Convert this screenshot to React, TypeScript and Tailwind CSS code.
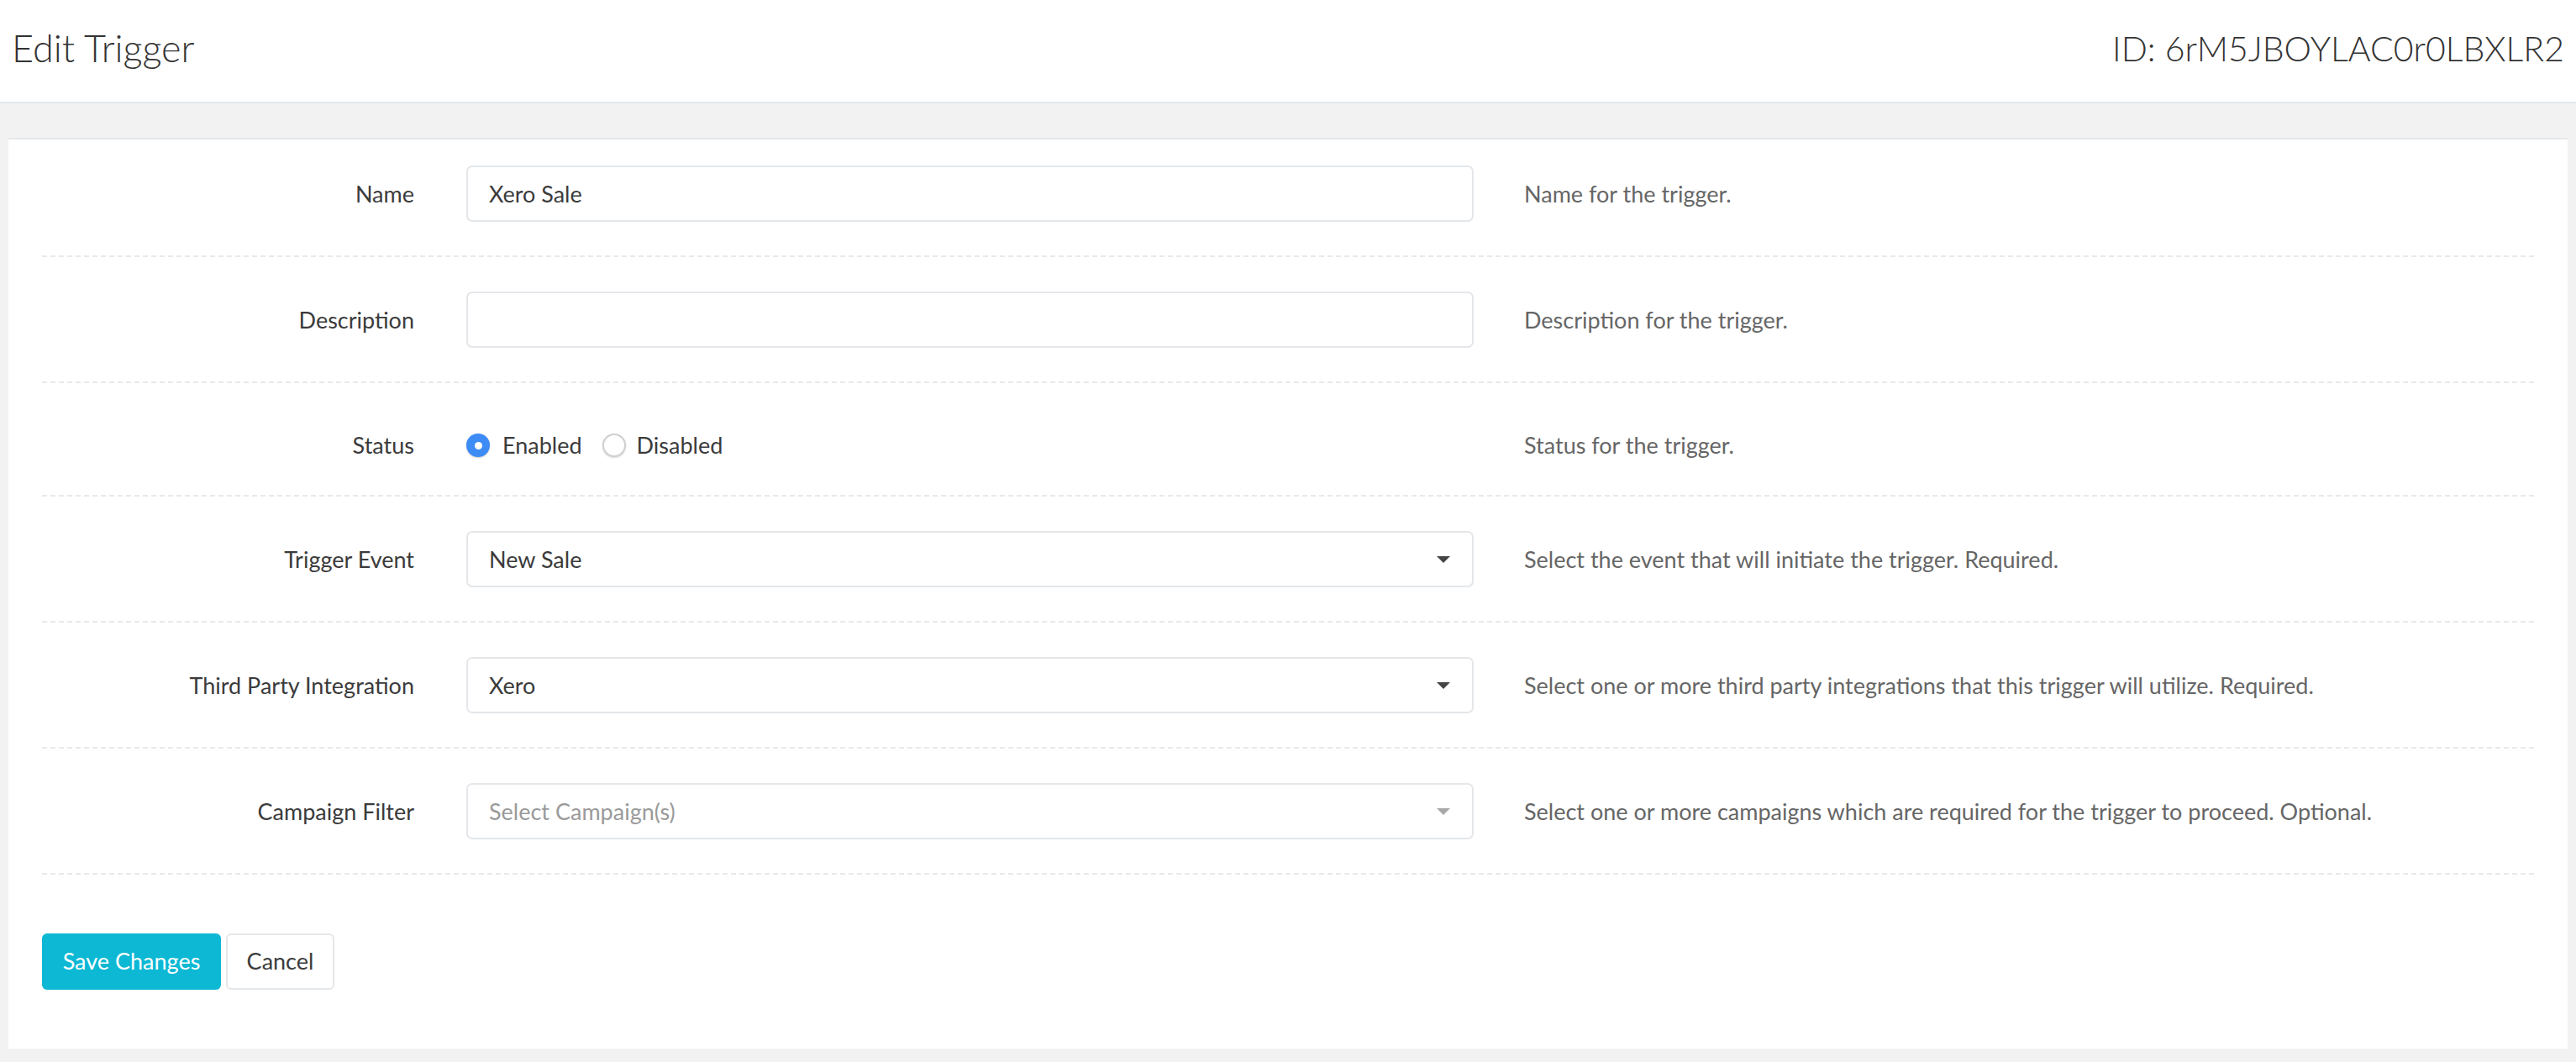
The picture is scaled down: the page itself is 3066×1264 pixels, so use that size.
import React from "react";

const font = { fontFamily: "Lato, 'Liberation Sans', sans-serif" };

function Caret({ light }: { light?: boolean }) {
  return (
    <svg width="16" height="8" viewBox="0 0 16 8" className="shrink-0">
      <path d="M0 0 L16 0 L8 8 Z" fill={light ? "#a8a8a8" : "#444444"} />
    </svg>
  );
}

function Row({
  label,
  help,
  children,
  first,
  status,
}: {
  label: string;
  help: string;
  children: React.ReactNode;
  first?: boolean;
  status?: boolean;
}) {
  const pad = first
    ? "pt-[31px] pb-[40px]"
    : status
    ? "pt-[53px] pb-[38px]"
    : "pt-[41px] pb-[40px]";
  return (
    <div className={`flex items-center border-b-2 border-dashed border-[#e6e9ed] leading-[42px] ${pad}`}>
      <div className="w-[443px] shrink-0 text-right text-[27px] text-[#3b3b3b]">{label}</div>
      <div className="ml-[62px] w-[1199px] shrink-0">{children}</div>
      <div className="ml-[60px] text-[27px] text-[#666666]">{help}</div>
    </div>
  );
}

function Input({ value }: { value?: string }) {
  return (
    <div className="h-[67px] rounded-[7px] border-2 border-[#e4e7ea] bg-white px-[25px] flex items-center text-[27px] text-[#3b3b3b]">
      {value}
    </div>
  );
}

function Select({ value, placeholder }: { value?: string; placeholder?: string }) {
  return (
    <div className="h-[67px] rounded-[7px] border-2 border-[#e4e7ea] bg-white pl-[25px] pr-[26px] flex items-center justify-between text-[27px]">
      {value ? (
        <span className="text-[#3b3b3b]">{value}</span>
      ) : (
        <span className="text-[#9a9a9a]">{placeholder}</span>
      )}
      <Caret light={!value} />
    </div>
  );
}

export default function App() {
  return (
    <div className="min-h-[1264px] bg-[#f2f2f2]" style={font}>
      <div className="h-[123px] bg-white border-b-2 border-[#e4e7eb] flex items-center justify-between px-[14px]">
        <div className="text-[45px] font-light text-[#333333] pb-[6px]">Edit Trigger</div>
        <div className="text-[41px] font-light text-[#333333] pb-[6px]">ID: 6rM5JBOYLAC0r0LBXLR2</div>
      </div>
      <div className="pt-[41px] px-[10px] pb-[15px]">
        <div className="bg-white border-t-2 border-[#e4e7eb] px-[40px] pb-[70px]">
          <Row label="Name" help="Name for the trigger." first>
            <Input value="Xero Sale" />
          </Row>
          <Row label="Description" help="Description for the trigger.">
            <Input />
          </Row>
          <Row label="Status" help="Status for the trigger." status>
            <div className="flex items-center text-[27px] text-[#3b3b3b] h-[42px]">
              <span className="w-[28px] h-[28px] rounded-full bg-[#3d8bf5] flex items-center justify-center shadow-[0_1px_2px_rgba(0,0,0,0.2)]">
                <span className="w-[9px] h-[9px] rounded-full bg-white" />
              </span>
              <span className="ml-[15px]">Enabled</span>
              <span className="ml-[24px] w-[28px] h-[28px] rounded-full bg-white border-2 border-[#d0d0d0] shadow-[0_1px_2px_rgba(0,0,0,0.15)]" />
              <span className="ml-[13px]">Disabled</span>
            </div>
          </Row>
          <Row label="Trigger Event" help="Select the event that will initiate the trigger. Required.">
            <Select value="New Sale" />
          </Row>
          <Row
            label="Third Party Integration"
            help="Select one or more third party integrations that this trigger will utilize. Required."
          >
            <Select value="Xero" />
          </Row>
          <Row
            label="Campaign Filter"
            help="Select one or more campaigns which are required for the trigger to proceed. Optional."
          >
            <Select placeholder="Select Campaign(s)" />
          </Row>
          <div className="flex gap-[6px] pt-[70px]">
            <button className="h-[67px] w-[213px] rounded-[6px] bg-[#0cb8d4] text-white text-[27px]">
              Save Changes
            </button>
            <button className="h-[67px] w-[129px] rounded-[6px] bg-white border-2 border-[#e4e7ea] text-[#3b3b3b] text-[27px]">
              Cancel
            </button>
          </div>
        </div>
      </div>
    </div>
  );
}
